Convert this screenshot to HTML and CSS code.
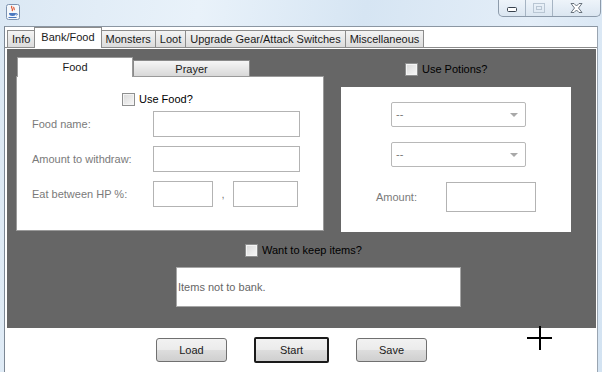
FILE: index.html
```html
<!DOCTYPE html>
<html lang="en">
<head>
    <meta charset="UTF-8">
    <title>Bank/Food</title>
    <link rel="stylesheet" href="styles.css">
</head>
<body>
    <div class="window">
        <div class="titlebar">
            <svg class="app-icon" width="14" height="16" viewBox="0 0 14 16">
                <rect x="0.5" y="0.5" width="13" height="15" rx="2" fill="#f4f8fc" stroke="#7d93b0"/>
                <path d="M6 2 C4 4 8 5 6 7 M8 3 C7 4 9 5 8 6" stroke="#e0502a" stroke-width="1.2" fill="none"/>
                <path d="M3 9 H10 C10 11 9 12 6.5 12 C4 12 3 11 3 9 Z" fill="#4a78c0"/>
                <path d="M10 9.5 C12 9.5 12 11 10 11" stroke="#4a78c0" fill="none"/>
                <rect x="2.5" y="13" width="8" height="1" fill="#4a78c0"/>
            </svg>
            <div class="caption-buttons">
                <span class="cap-btn cap-min"><svg width="10" height="5" viewBox="0 0 10 5"><rect x="0.5" y="0.5" width="9" height="4" rx="1" fill="#fff" stroke="#38424e"/></svg></span>
                <span class="cap-btn cap-max"><svg width="12" height="10" viewBox="0 0 12 10"><rect x="0.5" y="0.5" width="11" height="9" fill="none" stroke="#b9c6d3"/><rect x="3.5" y="3.5" width="5" height="3" fill="none" stroke="#b9c6d3"/></svg></span>
                <span class="cap-btn cap-close"><svg width="13" height="10" viewBox="0 0 13 10"><path d="M1 0.5 H4 L6.5 3 L9 0.5 H12 L8.5 5 L12 9.5 H9 L6.5 7 L4 9.5 H1 L4.5 5 Z" fill="#fff" stroke="#4a5562" stroke-width="0.8"/></svg></span>
            </div>
        </div>

        <div class="client">
            <div class="tabs">
                <span class="tab">Info</span>
                <span class="tab active">Bank/Food</span>
                <span class="tab">Monsters</span>
                <span class="tab">Loot</span>
                <span class="tab">Upgrade Gear/Attack Switches</span>
                <span class="tab">Miscellaneous</span>
            </div>

            <div class="tab-body">
                <div class="columns">
                    <div class="food-pane">
                        <div class="subtabs">
                            <span class="subtab active">Food</span>
                            <span class="subtab">Prayer</span>
                        </div>
                        <div class="food-panel">
                            <label class="check food-check"><span class="box"></span>Use Food?</label>
                            <div class="form">
                                <span class="lbl">Food name:</span>
                                <span class="field wide"></span>
                                <span class="lbl">Amount to withdraw:</span>
                                <span class="field wide"></span>
                                <span class="lbl">Eat between HP %:</span>
                                <span class="hp-range">
                                    <span class="field hp-min"></span>
                                    <span class="comma">,</span>
                                    <span class="field hp-max"></span>
                                </span>
                            </div>
                        </div>
                    </div>

                    <div class="potion-pane">
                        <label class="check potion-check"><span class="box"></span>Use Potions?</label>
                        <div class="potion-panel">
                            <div class="select">--<span class="arrow"></span></div>
                            <div class="select">--<span class="arrow"></span></div>
                            <div class="amount-row">
                                <span class="lbl">Amount:</span>
                                <span class="field amount"></span>
                            </div>
                        </div>
                    </div>
                </div>

                <label class="check keep-check"><span class="box"></span>Want to keep items?</label>
                <div class="textarea">Items not to bank.</div>
            </div>

            <div class="buttons">
                <button class="btn">Load</button>
                <button class="btn focused">Start</button>
                <button class="btn">Save</button>
            </div>

            <div class="crosshair"></div>
        </div>
    </div>
</body>
</html>
```
FILE: styles.css
```css
* {
    margin: 0;
    padding: 0;
    box-sizing: border-box;
}

body {
    font-family: 'Liberation Sans', Arial, sans-serif;
    font-size: 11px;
    color: #1a1a1a;
    overflow: hidden;
}

.window {
    width: 602px;
    height: 372px;
    display: flex;
    flex-direction: column;
    padding: 0 4px 0 4px;
    background: linear-gradient(100deg, #dbe8f4 0%, #e9f2fa 30%, #d6e5f3 55%, #e4eef8 80%, #d3e3f2 100%);
}

/* title bar */
.titlebar {
    height: 26px;
    display: flex;
    align-items: flex-start;
    justify-content: space-between;
    flex-shrink: 0;
}

.app-icon {
    margin: 4px 0 0 2px;
}

.caption-buttons {
    display: flex;
    height: 17px;
    margin-right: -3px;
    border: 1px solid #8d9bab;
    border-top: none;
    border-radius: 0 0 5px 5px;
    background: linear-gradient(#eef4fa, #dbe6f1);
}

.cap-btn {
    display: flex;
    align-items: center;
    justify-content: center;
}

.cap-min {
    width: 27px;
    border-right: 1px solid #a6b4c3;
    padding-top: 3px;
}

.cap-max {
    width: 27px;
    border-right: 1px solid #a6b4c3;
}

.cap-close {
    width: 47px;
}

/* client area */
.client {
    position: relative;
    flex: 1;
    background: #fff;
    border-left: 1px solid #7c8794;
    border-top: 1px solid #8b96a2;
    border-right: 1px solid #9aa5b1;
    display: flex;
    flex-direction: column;
}

.tabs {
    display: flex;
    align-items: flex-end;
    height: 21px;
    padding-left: 2px;
    border-bottom: 1px solid #8c8c8c;
}

.tab {
    height: 17px;
    padding: 0 4px;
    line-height: 17px;
    border: 1px solid #8c8c8c;
    border-bottom: none;
    margin-right: -1px;
    background: linear-gradient(#f4f4f4, #dcdcdc);
    white-space: nowrap;
}

.tab.active {
    height: 21px;
    margin-bottom: -1px;
    padding: 0 6px;
    background: #fff;
    line-height: 18px;
    position: relative;
    z-index: 1;
}

.tab-body {
    height: 281px;
    margin: 1px 1px 0 1px;
    background: #666;
    border-left: 1px solid #fff;
    border-bottom: 2px solid #fff;
    padding: 8px 0 0 9px;
}

.columns {
    display: flex;
    gap: 17px;
}

/* food sub tab pane */
.food-pane {
    width: 308px;
}

.subtabs {
    display: flex;
    align-items: flex-end;
    height: 19px;
    padding-left: 1px;
}

.subtab {
    width: 117px;
    height: 16px;
    text-align: center;
    line-height: 16px;
    border: 1px solid #8a8a8a;
    border-bottom: none;
    background: linear-gradient(#f6f6f6, #d8d8d8);
}

.subtab.active {
    width: 116px;
    height: 20px;
    margin-bottom: -1px;
    background: #fff;
    line-height: 18px;
    border-color: #9a9a9a;
    position: relative;
    z-index: 1;
}

.food-panel {
    height: 155px;
    background: #fff;
    border: 1px solid #9a9a9a;
    padding: 15px 0 0 15px;
}

.check {
    display: flex;
    align-items: center;
    gap: 4px;
    height: 14px;
    color: #000;
    white-space: nowrap;
}

.box {
    width: 13px;
    height: 13px;
    border: 1px solid #8e8f8f;
    background: linear-gradient(135deg, #d9d9d9, #f7f7f7);
    box-shadow: inset 0 0 0 1px #f4f4f4;
}

.food-check {
    margin-left: 90px;
}

.form {
    display: grid;
    grid-template-columns: 121px 147px;
    grid-auto-rows: 26px;
    row-gap: 9px;
    align-items: center;
    margin-top: 5px;
}

.lbl {
    color: #7a7a7a;
}

.field {
    display: block;
    height: 26px;
    border: 1px solid #b3b3b3;
    background: #fff;
}

.hp-range {
    display: flex;
    align-items: center;
    width: 150px;
}

.hp-min {
    width: 60px;
}

.comma {
    width: 20px;
    text-align: center;
    color: #7a7a7a;
}

.hp-max {
    width: 65px;
}

/* potions */
.potion-pane {
    width: 230px;
    padding-top: 5px;
}

.potion-check {
    margin-left: 64px;
}

.potion-panel {
    height: 145px;
    margin-top: 11px;
    background: #fff;
    padding: 15px 0 0 50px;
}

.select {
    position: relative;
    width: 135px;
    height: 25px;
    border: 1px solid #b8b8b8;
    border-radius: 2px;
    padding-left: 4px;
    line-height: 22px;
    color: #777;
    margin-bottom: 15px;
}

.arrow {
    position: absolute;
    right: 7px;
    top: 10px;
    border-left: 4px solid transparent;
    border-right: 4px solid transparent;
    border-top: 4px solid #a8a8a8;
}

.amount-row {
    display: flex;
    align-items: center;
    margin: 1px 0 0 -15px;
}

.amount-row .lbl {
    width: 70px;
}

.amount {
    width: 90px;
    height: 30px;
}

/* keep items */
.keep-check {
    margin: 11px 0 0 229px;
}

.textarea {
    width: 285px;
    height: 40px;
    margin: 10px 0 0 160px;
    background: #fff;
    border: 1px solid #a6a6a6;
    padding-left: 1px;
    line-height: 38px;
    color: #666;
}

/* buttons */
.buttons {
    display: flex;
    align-items: center;
    gap: 27px;
    padding: 7px 0 0 151px;
}

.btn {
    font-family: inherit;
    font-size: 11px;
    color: #1a1a1a;
    width: 71px;
    height: 24px;
    border: 1px solid #707070;
    border-radius: 3px;
    background: linear-gradient(#f2f2f2 0%, #ebebeb 50%, #dddddd 51%, #cfcfcf 100%);
}

.btn.focused {
    width: 75px;
    height: 26px;
    border: 2px solid #1a1a1a;
    border-radius: 2px;
}

.crosshair {
    position: absolute;
    left: 522px;
    top: 299px;
    width: 25px;
    height: 25px;
}

.crosshair::before,
.crosshair::after {
    content: "";
    position: absolute;
    background: #000;
}

.crosshair::before {
    left: 0;
    top: 11px;
    width: 25px;
    height: 2px;
}

.crosshair::after {
    left: 12px;
    top: 0;
    width: 2px;
    height: 24px;
}
```
